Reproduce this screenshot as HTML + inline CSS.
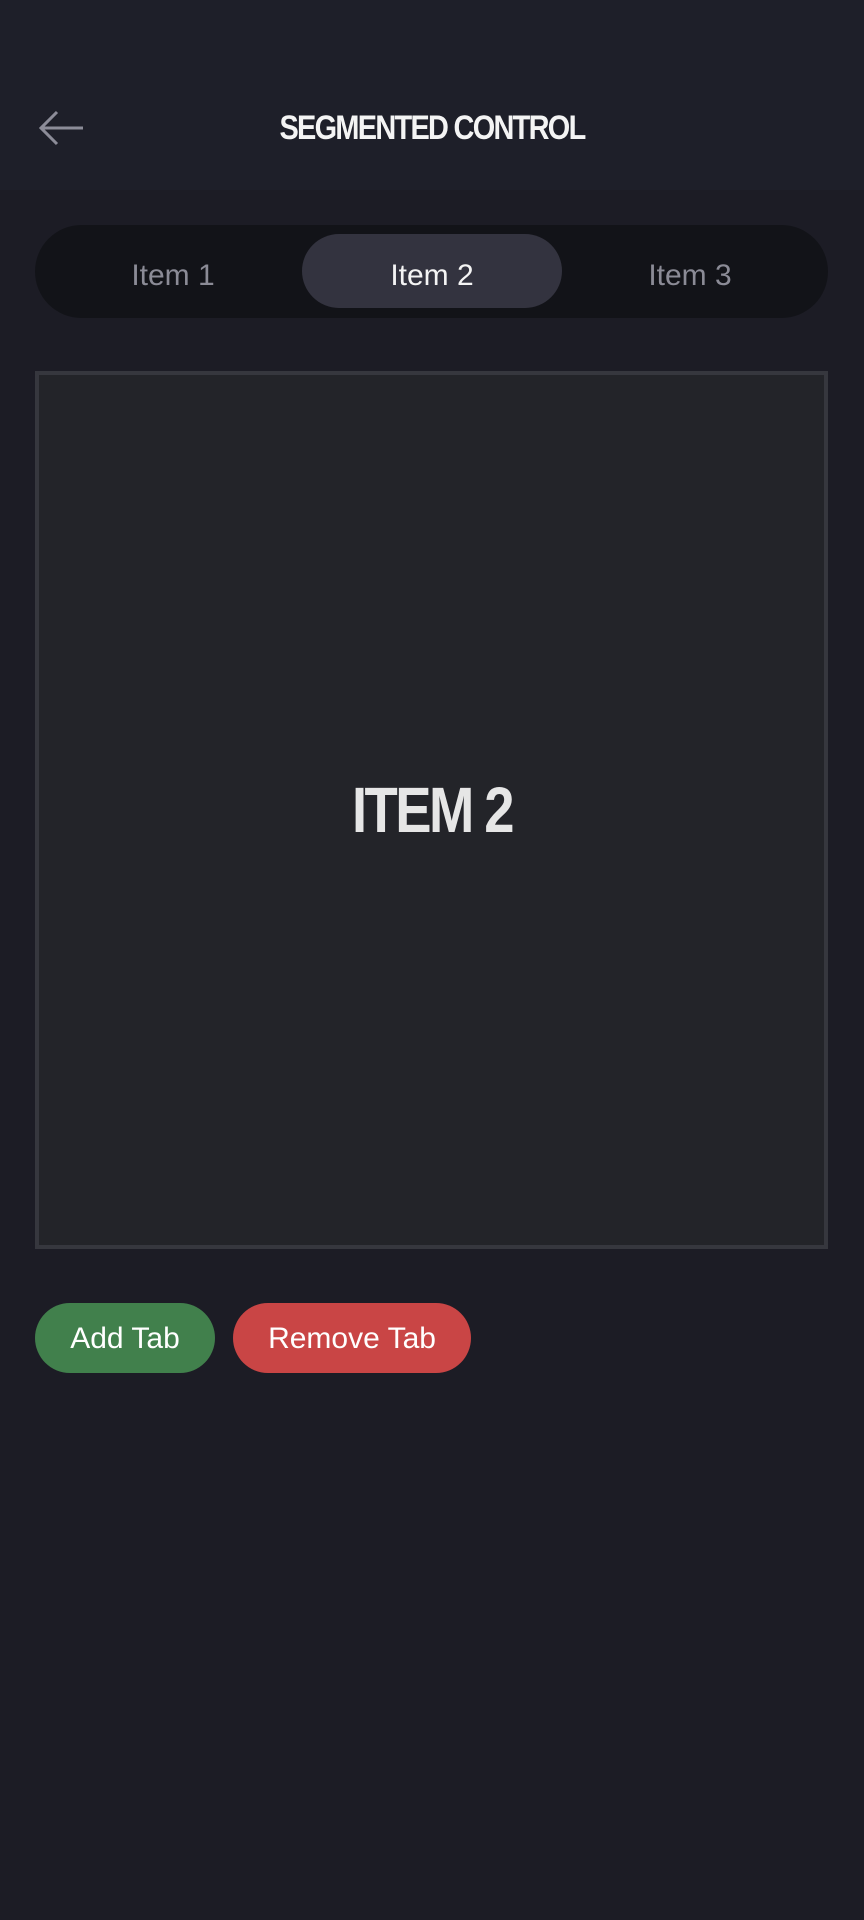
<!DOCTYPE html>
<html><head><meta charset="utf-8"><style>
*{margin:0;padding:0;box-sizing:border-box}
body{width:864px;height:1920px;background:#1c1c25;font-family:"Liberation Sans",sans-serif;position:relative;overflow:hidden}
.hdr{position:absolute;left:0;top:0;width:864px;height:190px;background:#1e1f29}
.title{position:absolute;left:0;width:864px;top:106px;text-align:center;color:#f4f4f4;font-weight:bold;font-size:34px;letter-spacing:-2px;transform:scaleX(0.85);line-height:44px}
.seg{position:absolute;left:35px;top:225px;width:793px;height:93px;border-radius:47px;background:#121318}
.pill{position:absolute;left:302px;top:234px;width:260px;height:74px;border-radius:37px;background:#33333f}
.it{position:absolute;top:254px;font-size:30px;line-height:44px;color:#8b8b96;width:260px;text-align:center}
.panel{position:absolute;left:35px;top:371px;width:793px;height:878px;background:#232429;border:4px solid #36373e}
.big{position:absolute;left:0;width:864px;top:775px;text-align:center;color:#e6e6e6;font-weight:bold;font-size:64px;line-height:70px;letter-spacing:-3px;transform:scaleX(0.85)}
.btn{position:absolute;top:1303px;height:70px;border-radius:35px;color:#fff;font-size:30px;line-height:72px;text-align:center}
</style></head><body>
<div class="hdr"></div>
<svg style="position:absolute;left:38px;top:110px" width="48" height="36" viewBox="0 0 48 36"><path d="M45 18H3M19 2L3 18L19 34" fill="none" stroke="#8c8c98" stroke-width="3"/></svg>
<div class="title">SEGMENTED CONTROL</div>
<div class="seg"></div>
<div class="pill"></div>
<div class="it" style="left:43px">Item 1</div>
<div class="it" style="left:302px;color:#f4f4f4">Item 2</div>
<div class="it" style="left:560px">Item 3</div>
<div class="panel"></div>
<div class="big">ITEM 2</div>
<div class="btn" style="left:35px;width:180px;background:#41804c">Add Tab</div>
<div class="btn" style="left:233px;width:238px;background:#c94545">Remove Tab</div>
</body></html>
